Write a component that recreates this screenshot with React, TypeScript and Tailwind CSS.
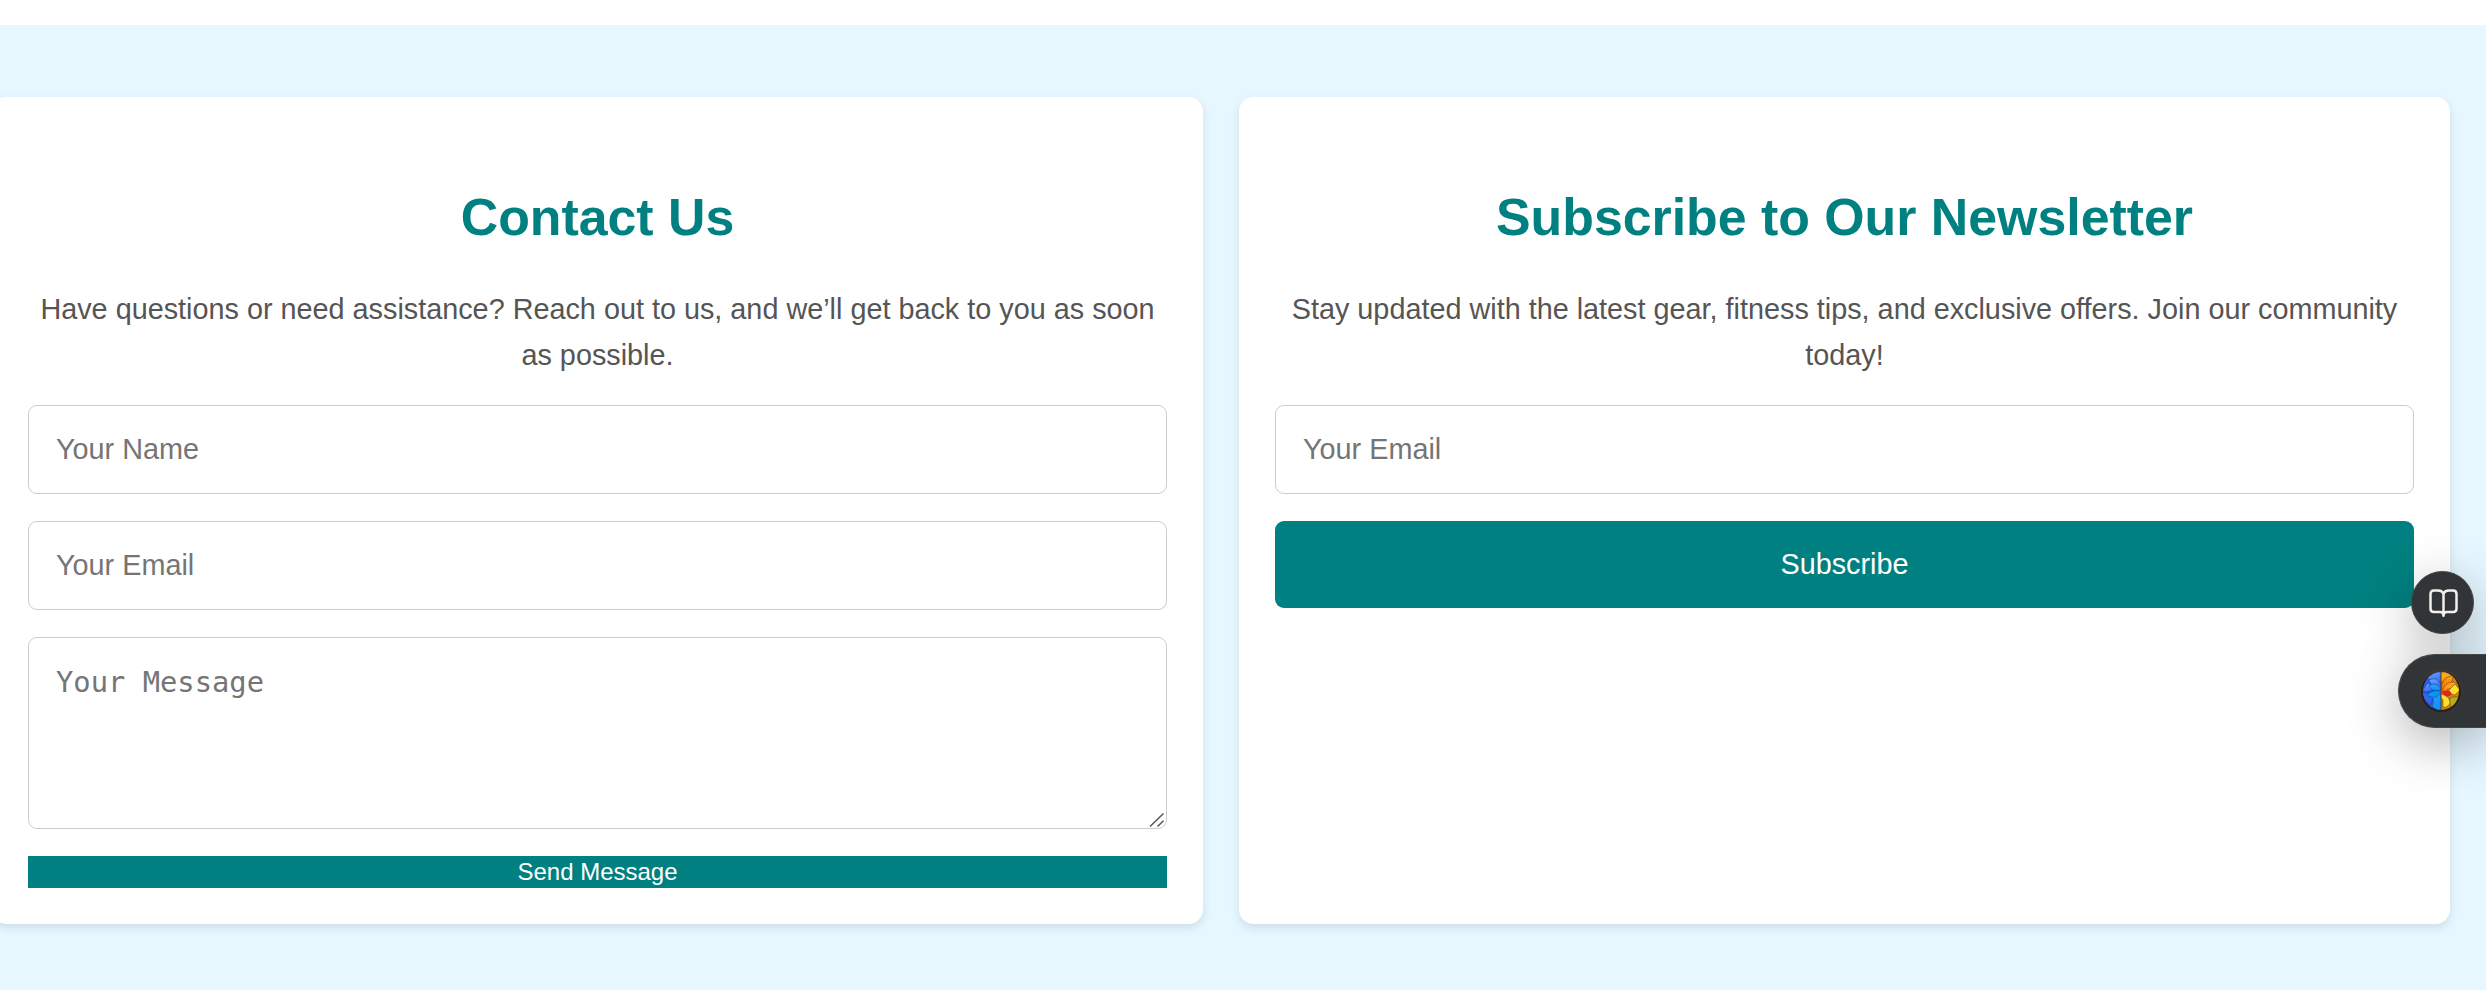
import type { ReactNode } from "react";

const fieldClass =
  "block w-full rounded-[9px] border border-[#cccccc] bg-white px-[27px] text-[28.8px] text-[#333333] outline-none placeholder:text-[#757575]";

function Card({ title, text, children }: { title: string; text: string; children: ReactNode }) {
  return (
    <section className="min-w-0 flex-1 rounded-[14.4px] bg-white p-9 shadow-[0_4px_10px_rgba(0,0,0,0.1)]">
      <h2 className="mt-[43px] mb-[27px] text-center text-[51.84px] leading-[83px] font-bold text-[#008080]">
        {title}
      </h2>
      <p className="mb-[27px] text-center text-[28.8px] leading-[46px] text-[#555555]">{text}</p>
      <form className="flex flex-col gap-[27px]" onSubmit={(e) => e.preventDefault()}>
        {children}
      </form>
    </section>
  );
}

function BookIcon() {
  return (
    <svg width="32" height="32" viewBox="0 0 32 32" fill="none" stroke="#f3f0ec" strokeWidth="2.5" strokeLinejoin="round" strokeLinecap="round">
      <path d="M16.5 7C15.7 4.6 13.8 3.5 11 3.5H7C4.7 3.5 3.5 4.7 3.5 7V21.6C3.5 23.9 4.7 25.1 7 25.1H13C15 25.1 16.5 25.8 16.5 28.8C16.5 25.8 18 25.1 20 25.1H26C28.3 25.1 29.5 23.9 29.5 21.6V7C29.5 4.7 28.3 3.5 26 3.5H22C19.2 3.5 17.3 4.6 16.5 7ZM16.5 7V28" />
    </svg>
  );
}

function BrainIcon() {
  return (
    <svg width="44" height="44" viewBox="0 0 44 44">
      <defs>
        <clipPath id="ball">
          <ellipse cx="22" cy="22" rx="18" ry="19" />
        </clipPath>
        <linearGradient id="blue" x1="0" y1="0" x2="0.4" y2="1">
          <stop offset="0" stopColor="#70a5ff" />
          <stop offset="1" stopColor="#2f6cf5" />
        </linearGradient>
        <linearGradient id="sky" x1="0" y1="0" x2="0.6" y2="1">
          <stop offset="0" stopColor="#3d9bff" />
          <stop offset="1" stopColor="#0795f6" />
        </linearGradient>
        <linearGradient id="orange" x1="1" y1="0" x2="0" y2="1">
          <stop offset="0" stopColor="#ffa51c" />
          <stop offset="1" stopColor="#f66a0c" />
        </linearGradient>
      </defs>
      <circle cx="22" cy="22" r="21.8" fill="#3f3734" />
      <circle cx="22" cy="23" r="20.2" fill="#29211f" />
      <g clipPath="url(#ball)" strokeWidth="0.6">
        <rect x="3" y="3" width="19" height="38" fill="#2b5fe8" />
        <rect x="22" y="3" width="19" height="38" fill="#c98c12" />
        <g fill="url(#blue)" stroke="#1b489f">
          <path d="M22 3H13L8 9L13 12L22 15Z" />
          <path d="M13 10C17 9 22 12 22 20C17 20 12 16 10 11Z" />
          <path d="M3 22L9 14L16 20L9 23L4 22Z" />
          <path d="M3 24L10 24L14 27L12 36L6 32Z" fill="#3467ee" />
        </g>
        <path d="M13 28C17 27 19 24 22 23V41H18L13 37C15 34 15 31 13 28Z" fill="url(#sky)" stroke="#174b9f" />
        <path d="M22 21C20 14 14 14 10 17C12 21 17 23 22 21Z" fill="url(#sky)" stroke="#174b9f" />
        <path d="M22 22C17 21 11 22 8 26C13 30 20 29 22 22Z" fill="#0795f6" stroke="#174b9f" />
        <g stroke="#6f4313">
          <path d="M22 3H29L34 8L26 11L22 14Z" fill="#f6aa18" />
          <path d="M22 21C22 11 27 7 34 7C34 14 29 18 22 21Z" fill="url(#orange)" />
          <path d="M24 20C27 13 33 12 38 14L34 19L24 21Z" fill="#ff9d18" />
          <path d="M30 21L36 15L41 21L36 26L31 25Z" fill="#ffdf2d" />
          <path d="M32 28L40 28L37 35L32 38L30 32Z" fill="#b8ac22" />
          <path d="M22 25C27 26 31 29 31 34C29 38 26 39 24 38V31L22 29Z" fill="#ffdf32" />
        </g>
        <path d="M22 22C26 20 31 21 33 25C30 29 25 28 22 22Z" fill="#df2522" />
        <path d="M22 21L31 19L26 22Z" fill="#ff7e15" />
        <path d="M22 3V41" stroke="#5b4426" strokeWidth="0.7" />
      </g>
    </svg>
  );
}

export default function App() {
  return (
    <div className="relative h-[990px] overflow-hidden bg-white pt-[25px] font-['Liberation_Sans',Arial,sans-serif]">
      <main className="h-[965px] bg-[#e6f7ff] pt-[72px] pr-9">
        <div className="-ml-2 flex h-[827px] gap-9">
          <Card
            title="Contact Us"
            text="Have questions or need assistance? Reach out to us, and we’ll get back to you as soon as possible."
          >
            <input className={`${fieldClass} h-[89px]`} type="text" placeholder="Your Name" />
            <input className={`${fieldClass} h-[89px]`} type="email" placeholder="Your Email" />
            <div className="relative">
              <textarea
                className={`${fieldClass} h-[192px] resize-none py-[27px] font-['DejaVu_Sans_Mono',monospace] leading-[34px]`}
                placeholder="Your Message"
              />
              <svg className="absolute right-[2px] bottom-[1px]" width="16" height="16" viewBox="0 0 16 16" fill="none" stroke="#555555" strokeWidth="1.5">
                <path d="M1 14.5L14.5 1.5M8.5 14.5L14.5 8.8" />
              </svg>
            </div>
            <button className="block h-8 w-full bg-[#008080] text-center text-[24px] leading-8 text-white">
              Send Message
            </button>
          </Card>
          <Card
            title="Subscribe to Our Newsletter"
            text="Stay updated with the latest gear, fitness tips, and exclusive offers. Join our community today!"
          >
            <input className={`${fieldClass} h-[89px]`} type="email" placeholder="Your Email" />
            <button className="block h-[87px] w-full rounded-[9px] bg-[#008080] text-center text-[28.8px] text-white">
              Subscribe
            </button>
          </Card>
        </div>
      </main>
      <button
        aria-label="Read"
        className="absolute top-[571px] right-3 flex size-[63px] items-center justify-center rounded-full border border-[#494645] bg-[#313537] shadow-[0_14px_54px_rgba(0,0,0,0.3)]"
      >
        <BookIcon />
      </button>
      <button
        aria-label="Assistant"
        className="absolute top-[654px] right-0 flex h-[74px] w-[88px] items-center rounded-l-full border border-r-0 border-[#494645] bg-[#313537] pl-[20px] shadow-[0_14px_54px_rgba(0,0,0,0.3)]"
      >
        <BrainIcon />
      </button>
    </div>
  );
}
